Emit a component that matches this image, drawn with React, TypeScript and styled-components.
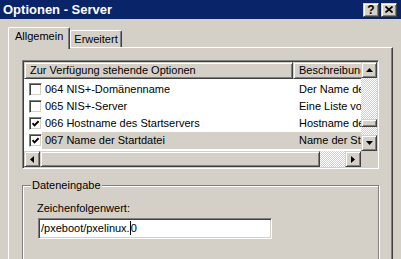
import styled, { createGlobalStyle } from "styled-components";

const face = "#d4d0c8";
const shadow = "#808080";
const dark = "#404040";

const GlobalStyle = createGlobalStyle`
  body {
    margin: 0;
    font-family: "Liberation Sans", Arial, sans-serif;
    font-size: 11px;
    color: #000;
  }
  * { box-sizing: border-box; }
`;

const options = [
  { label: "064 NIS+-Domänenname", desc: "Der Name der NIS+-Domäne", checked: false },
  { label: "065 NIS+-Server", desc: "Eine Liste von NIS+-Servern", checked: false },
  { label: "066 Hostname des Startservers", desc: "Hostname des TFTP-Servers", checked: true },
  { label: "067 Name der Startdatei", desc: "Name der Startdatei", checked: true, selected: true },
];

export default function App() {
  return (
    <>
      <GlobalStyle />
      <Window>
        <TitleBar>
          <Title>Optionen - Server</Title>
          <TitleBtn>?</TitleBtn>
          <TitleBtn>
            <svg width="8" height="7" viewBox="0 0 8 7">
              <path d="M0.5 0.5 L7.5 6.5 M7.5 0.5 L0.5 6.5" stroke="#000" strokeWidth="1.7" />
            </svg>
          </TitleBtn>
        </TitleBar>
        <Body>
          <TabStrip>
            <Tab $active>Allgemein</Tab>
            <Tab>Erweitert</Tab>
          </TabStrip>
          <Panel>
            <ListBox>
              <ListContent>
                <Header>
                  <HeaderCell $w={269}>Zur Verfügung stehende Optionen</HeaderCell>
                  <HeaderCell $w={110}>Beschreibung</HeaderCell>
                </Header>
                <Rows>
                  {options.map((o) => (
                    <Row key={o.label}>
                      <CheckBox>
                        {o.checked && (
                          <svg width="7" height="7" viewBox="0 0 7 7">
                            <polyline points="0.5,3.2 2.5,5.3 6.6,1.2" fill="none" stroke="#000" strokeWidth="1.9" />
                          </svg>
                        )}
                      </CheckBox>
                      <NameCell $selected={o.selected}>{o.label}</NameCell>
                      <DescCell $selected={o.selected}>{o.desc}</DescCell>
                    </Row>
                  ))}
                </Rows>
              </ListContent>
              <VScroll>
                <ScrollBtn>
                  <Arrow dir="up" />
                </ScrollBtn>
                <VTrack>
                  <VThumb />
                </VTrack>
                <ScrollBtn>
                  <Arrow dir="down" />
                </ScrollBtn>
              </VScroll>
              <HScroll>
                <ScrollBtn>
                  <Arrow dir="left" />
                </ScrollBtn>
                <HTrack>
                  <HThumb />
                </HTrack>
                <ScrollBtn>
                  <Arrow dir="right" />
                </ScrollBtn>
              </HScroll>
              <Corner />
            </ListBox>
            <GroupBox>
              <Legend>Dateneingabe</Legend>
              <FieldLabel>Zeichenfolgenwert:</FieldLabel>
              <TextInput>
                /pxeboot/pxelinux.<Caret />0
              </TextInput>
            </GroupBox>
          </Panel>
        </Body>
      </Window>
    </>
  );
}

function Arrow({ dir }: { dir: "up" | "down" | "left" | "right" }) {
  const vertical = dir === "up" || dir === "down";
  const pts = {
    up: "3.5,0 7,4 0,4",
    down: "0,0 7,0 3.5,4",
    left: "4,0 4,7 0,3.5",
    right: "0,0 4,3.5 0,7",
  }[dir];
  return (
    <svg width={vertical ? 7 : 4} height={vertical ? 4 : 7} viewBox={vertical ? "0 0 7 4" : "0 0 4 7"}>
      <polygon points={pts} fill="#000" />
    </svg>
  );
}

const raised = `
  background: ${face};
  border: 1px solid;
  border-color: ${face} ${dark} ${dark} ${face};
  box-shadow: inset 1px 1px #fff, inset -1px -1px ${shadow};
`;

const sunken = `
  border: 1px solid;
  border-color: ${shadow} #fff #fff ${shadow};
  box-shadow: inset 1px 1px ${dark}, inset -1px -1px ${face};
`;

const checker = `
  background-color: ${face};
  background-image: repeating-conic-gradient(#fff 0 25%, ${face} 0 50%);
  background-size: 2px 2px;
`;

const Window = styled.div`
  width: 401px;
  height: 259px;
  overflow: hidden;
  background: ${face};
  display: flex;
  flex-direction: column;
`;

const TitleBar = styled.div`
  height: 19px;
  flex-shrink: 0;
  background: #0a246a;
  display: flex;
  align-items: center;
  gap: 2px;
  padding: 0 4px 0 3px;
`;

const Title = styled.div`
  flex: 1;
  color: #fff;
  font-weight: bold;
  font-size: 13px;
`;

const TitleBtn = styled.div`
  ${raised}
  width: 16px;
  height: 14px;
  display: flex;
  align-items: center;
  justify-content: center;
  font-weight: bold;
  font-size: 12px;
  line-height: 12px;
`;

const Body = styled.div`
  flex: 1;
  display: flex;
  flex-direction: column;
  padding: 8px 8px 0 8px;
`;

const TabStrip = styled.div`
  display: flex;
  align-items: flex-end;
  height: 20px;
  position: relative;
  z-index: 1;
`;

const Tab = styled.div<{ $active?: boolean }>`
  height: ${(p) => (p.$active ? 22 : 17)}px;
  margin-bottom: ${(p) => (p.$active ? -2 : 0)}px;
  background: ${face};
  border-top: 1px solid #fff;
  border-left: 1px solid #fff;
  border-right: 1px solid ${dark};
  box-shadow: inset -1px 0 ${shadow};
  border-radius: 2px 2px 0 0;
  padding: 2px ${(p) => (p.$active ? 6 : 3)}px 0;
  line-height: 13px;
  white-space: nowrap;
`;

const Panel = styled.div`
  flex: 1;
  border-top: 1px solid #fff;
  border-left: 1px solid #fff;
  border-right: 1px solid ${dark};
  box-shadow: inset -1px 0 ${shadow};
  padding: 12px 13px 0 13px;
`;

const ListBox = styled.div`
  ${sunken}
  height: 109px;
  padding: 1px;
  background: #fff;
  display: grid;
  grid-template-columns: 1fr 16px;
  grid-template-rows: 1fr 16px;
`;

const ListContent = styled.div`
  overflow: hidden;
  min-width: 0;
`;

const Header = styled.div`
  display: flex;
  height: 17px;
`;

const HeaderCell = styled.div<{ $w: number }>`
  ${raised}
  flex-shrink: 0;
  width: ${(p) => p.$w}px;
  padding: 0 5px;
  line-height: 15px;
  white-space: nowrap;
  overflow: hidden;
`;

const Rows = styled.div`
  padding-top: 2px;
`;

const Row = styled.div`
  display: flex;
  align-items: center;
  height: 17px;
  padding-left: 5px;
  white-space: nowrap;
`;

const CheckBox = styled.div`
  ${sunken}
  width: 13px;
  height: 13px;
  flex-shrink: 0;
  background: #fff;
  display: flex;
  align-items: center;
  justify-content: center;
`;

const NameCell = styled.div<{ $selected?: boolean }>`
  flex-shrink: 0;
  width: 251px;
  height: 17px;
  line-height: 17px;
  padding-left: 3px;
  background: ${(p) => (p.$selected ? face : "transparent")};
`;

const DescCell = styled.div<{ $selected?: boolean }>`
  flex-shrink: 0;
  width: 110px;
  height: 17px;
  line-height: 17px;
  padding-left: 6px;
  overflow: hidden;
  background: ${(p) => (p.$selected ? face : "transparent")};
`;

const VScroll = styled.div`
  display: flex;
  flex-direction: column;
`;

const HScroll = styled.div`
  display: flex;
`;

const ScrollBtn = styled.div`
  ${raised}
  width: 16px;
  height: 16px;
  flex-shrink: 0;
  display: flex;
  align-items: center;
  justify-content: center;
`;

const VTrack = styled.div`
  ${checker}
  flex: 1;
`;

const VThumb = styled.div`
  ${raised}
  margin-top: 41px;
  height: 8px;
`;

const HTrack = styled.div`
  ${checker}
  flex: 1;
  display: flex;
`;

const HThumb = styled.div`
  ${raised}
  width: 280px;
  height: 16px;
`;

const Corner = styled.div`
  background: ${face};
`;

const GroupBox = styled.div`
  position: relative;
  margin-top: 16px;
  height: 100px;
  border: 1px solid ${shadow};
  box-shadow: inset 1px 1px #fff, 1px 1px #fff;
  padding: 16px 13px 0 14px;
`;

const Legend = styled.div`
  position: absolute;
  top: -7px;
  left: 8px;
  padding: 0 1px;
  line-height: 13px;
  background: ${face};
`;

const FieldLabel = styled.div`
  line-height: 13px;
  margin-bottom: 3px;
`;

const TextInput = styled.div`
  ${sunken}
  margin-left: 1px;
  width: 234px;
  height: 21px;
  background: #fff;
  padding-left: 2px;
  line-height: 19px;
  white-space: nowrap;
`;

const Caret = styled.span`
  display: inline-block;
  width: 1px;
  height: 14px;
  background: #000;
  vertical-align: -3px;
`;
